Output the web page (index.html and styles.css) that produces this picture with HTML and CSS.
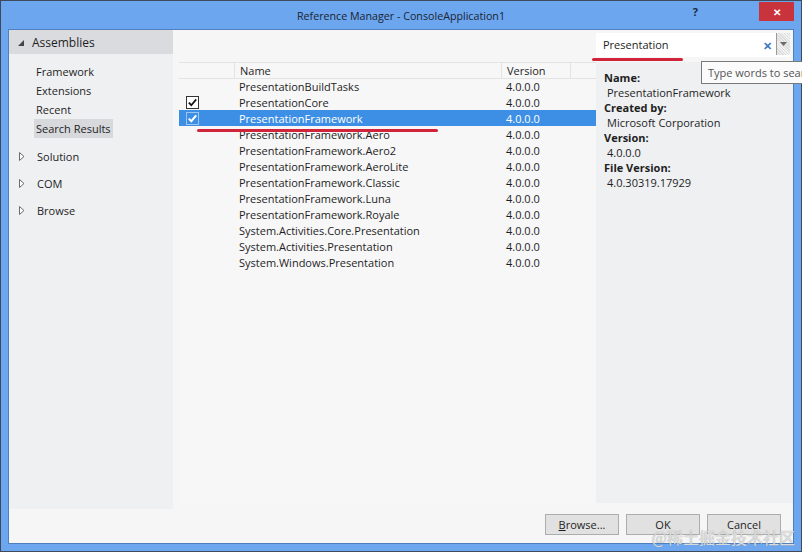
FILE: index.html
```html
<!DOCTYPE html>
<html>
<head>
<meta charset="utf-8">
<link rel="stylesheet" href="styles.css">
</head>
<body>
<div class="window">
  <div class="titlebar">
    <span class="title">Reference Manager - ConsoleApplication1</span>
    <div class="caption">
      <span class="help">?</span>
      <span class="close">✕</span>
    </div>
  </div>
  <div class="client">
    <div class="main">
      <nav class="nav">
        <div class="nav-head"><span class="tri-open"></span>Assemblies</div>
        <ul class="sub">
          <li><span>Framework</span></li>
          <li><span>Extensions</span></li>
          <li><span>Recent</span></li>
          <li><span class="sel">Search Results</span></li>
        </ul>
        <ul class="groups">
          <li><svg class="tri-closed" width="6" height="9" viewBox="0 0 6 9"><path d="M0.5 0.5L5 4.5L0.5 8.5Z" fill="#fff" stroke="#6b6b6b"/></svg>Solution</li>
          <li><svg class="tri-closed" width="6" height="9" viewBox="0 0 6 9"><path d="M0.5 0.5L5 4.5L0.5 8.5Z" fill="#fff" stroke="#6b6b6b"/></svg>COM</li>
          <li><svg class="tri-closed" width="6" height="9" viewBox="0 0 6 9"><path d="M0.5 0.5L5 4.5L0.5 8.5Z" fill="#fff" stroke="#6b6b6b"/></svg>Browse</li>
        </ul>
      </nav>
      <div class="content">
        <div class="toolbar">
          <div class="search">
            <span class="search-text">Presentation</span>
            <span class="search-x">✕</span>
            <span class="search-drop"><svg width="7" height="4" viewBox="0 0 7 4"><path d="M0 0H7L3.5 4Z" fill="#6a6a6a"/></svg></span>
          </div>
        </div>
        <div class="panes">
          <div class="list">
            <div class="row head">
              <span class="c-check"></span>
              <span class="c-name">Name</span>
              <span class="c-ver">Version</span>
              <span class="c-rest"></span>
            </div>
            <div class="row"><span class="c-check"></span><span class="c-name">PresentationBuildTasks</span><span class="c-ver">4.0.0.0</span></div>
            <div class="row"><span class="c-check"><svg class="cb" width="13" height="13" viewBox="0 0 13 13"><rect x="0.5" y="0.5" width="12" height="12" fill="#fff" stroke="#333"/><path d="M2.8 6.6L5.3 9.2L10.2 3.4" fill="none" stroke="#111" stroke-width="1.7"/></svg></span><span class="c-name">PresentationCore</span><span class="c-ver">4.0.0.0</span></div>
            <div class="row selected"><span class="c-check"><svg class="cb" width="13" height="13" viewBox="0 0 13 13"><rect x="0.5" y="0.5" width="12" height="12" fill="none" stroke="#fff" stroke-dasharray="1 1"/><path d="M2.8 6.6L5.3 9.2L10.2 3.4" fill="none" stroke="#fff" stroke-width="2"/></svg></span><span class="c-name">PresentationFramework</span><span class="c-ver">4.0.0.0</span></div>
            <div class="row"><span class="c-check"></span><span class="c-name">PresentationFramework.Aero</span><span class="c-ver">4.0.0.0</span></div>
            <div class="row"><span class="c-check"></span><span class="c-name">PresentationFramework.Aero2</span><span class="c-ver">4.0.0.0</span></div>
            <div class="row"><span class="c-check"></span><span class="c-name">PresentationFramework.AeroLite</span><span class="c-ver">4.0.0.0</span></div>
            <div class="row"><span class="c-check"></span><span class="c-name">PresentationFramework.Classic</span><span class="c-ver">4.0.0.0</span></div>
            <div class="row"><span class="c-check"></span><span class="c-name">PresentationFramework.Luna</span><span class="c-ver">4.0.0.0</span></div>
            <div class="row"><span class="c-check"></span><span class="c-name">PresentationFramework.Royale</span><span class="c-ver">4.0.0.0</span></div>
            <div class="row"><span class="c-check"></span><span class="c-name">System.Activities.Core.Presentation</span><span class="c-ver">4.0.0.0</span></div>
            <div class="row"><span class="c-check"></span><span class="c-name">System.Activities.Presentation</span><span class="c-ver">4.0.0.0</span></div>
            <div class="row"><span class="c-check"></span><span class="c-name">System.Windows.Presentation</span><span class="c-ver">4.0.0.0</span></div>
          </div>
          <div class="details">
            <div class="lbl">Name:</div>
            <div class="val">PresentationFramework</div>
            <div class="lbl">Created by:</div>
            <div class="val">Microsoft Corporation</div>
            <div class="lbl">Version:</div>
            <div class="val">4.0.0.0</div>
            <div class="lbl">File Version:</div>
            <div class="val">4.0.30319.17929</div>
          </div>
        </div>
      </div>
    </div>
    <div class="footer">
      <button class="btn"><u>B</u>rowse...</button>
      <button class="btn">OK</button>
      <button class="btn">Cancel</button>
    </div>
  </div>
  <div class="mark mark-row"></div>
  <div class="mark mark-search"></div>
  <div class="tooltip">Type words to search</div>
  <div class="watermark">@稀土掘金技术社区</div>
</div>
</body>
</html>
```
FILE: styles.css
```css
html, body {
  margin: 0;
  padding: 0;
  width: 802px;
  height: 552px;
  overflow: hidden;
  background: #6ba6ef;
}
* { box-sizing: border-box; }
ul { list-style: none; margin: 0; padding: 0; }

.window {
  position: relative;
  width: 802px;
  height: 552px;
  border: 1px solid #3e4a5a;
  background: #6ba6ef;
  padding: 0 7px 7px 7px;
  display: flex;
  flex-direction: column;
  font-family: "Open Sans", "Noto Sans", sans-serif;
  font-size: 11px;
  color: #1e1e1e;
}

.titlebar {
  height: 28px;
  position: relative;
  display: flex;
  align-items: center;
  justify-content: center;
}
.title {
  font-size: 10.7px;
  color: #1b2430;
  padding-top: 1px;
}
.caption {
  position: absolute;
  right: 0;
  top: 0;
  display: flex;
  align-items: flex-start;
}
.help {
  font-weight: bold;
  font-size: 11px;
  color: #1d2b3c;
  margin-top: 3px;
  margin-right: 61px;
}
.close {
  width: 35px;
  height: 19px;
  margin-top: 1px;
  background: #c9343c;
  color: #fff;
  font-size: 10px;
  font-weight: bold;
  display: flex;
  align-items: center;
  justify-content: center;
}

.client {
  flex: 1;
  border: 1px solid #4f7fbf;
  background: #f6f6f7;
  display: flex;
  flex-direction: column;
}
.main {
  height: 479px;
  display: flex;
  gap: 6px;
}
.nav {
  width: 164px;
  background: #eef0f2;
}
.nav-head {
  height: 24px;
  background: #dadbde;
  display: flex;
  align-items: center;
  font-size: 12px;
  padding-left: 9px;
}
.tri-open {
  width: 0;
  height: 0;
  border-left: 6px solid transparent;
  border-bottom: 6px solid #444;
  margin-right: 8px;
  margin-top: 1px;
}
.sub { margin-top: 8px; }
.sub li {
  height: 19px;
  display: flex;
  align-items: center;
  padding-left: 25px;
}
.sub li span {
  padding: 0 2px;
  height: 19px;
  line-height: 19px;
}
.sub li .sel { background: #d8d9dc; }
.groups { margin-top: 5px; }
.groups li {
  height: 27px;
  display: flex;
  align-items: center;
  padding-left: 10px;
}
.tri-closed {
  display: block;
  margin-right: 12px;
}

.content {
  flex: 1;
  display: flex;
  flex-direction: column;
  padding-bottom: 6px;
}
.toolbar {
  height: 32px;
  display: flex;
  justify-content: flex-end;
  padding-top: 3px;
  padding-right: 3px;
}
.search {
  width: 194px;
  height: 24px;
  background: #fff;
  display: flex;
  align-items: center;
  padding-left: 7px;
}
.search-text { flex: 1; font-size: 11px; padding-bottom: 1px; }
.search-x {
  color: #3b79c2;
  font-weight: bold;
  font-size: 11px;
  margin-right: 4px;
}
.search-drop {
  width: 14px;
  height: 22px;
  align-self: flex-start;
  border-left: 1px solid #9a9a9a;
  background: repeating-linear-gradient(45deg, #dcdcdc 0 1px, #f2f2f2 1px 2px);
  display: flex;
  align-items: center;
  justify-content: center;
}

.panes {
  flex: 1;
  display: flex;
}
.list {
  width: 417px;
  background: #f7f7f8;
}
.row {
  height: 16px;
  display: flex;
  align-items: center;
  white-space: nowrap;
  line-height: 15px;
}
.row.head {
  border-top: 1px solid #e2e3e5;
  border-bottom: 1px solid #e2e3e5;
  box-sizing: content-box;
  height: 15px;
  margin-bottom: -1px;
}
.row.head span { height: 15px; line-height: 15px; }
.row.head .c-name, .row.head .c-ver, .row.head .c-rest { border-left: 1px solid #e2e3e5; }
.c-check {
  width: 55px;
  padding-left: 7px;
  display: flex;
  align-items: center;
}
.c-name { width: 267px; padding-left: 5px; }
.c-ver { width: 69px; padding-left: 5px; }
.c-rest { flex: 1; }
.row.selected {
  background: #3d8fe5;
  color: #fff;
}
.cb { display: block; }

.details {
  flex: 1;
  background: #eef0f2;
  padding: 8px 0 0 8px;
  line-height: 15px;
}
.lbl { font-weight: bold; }
.val { padding-left: 3px; }

.footer {
  flex: 1;
  display: flex;
  justify-content: flex-end;
  align-items: flex-start;
  gap: 7px;
  padding-top: 5px;
  padding-right: 12px;
}
.btn {
  width: 74px;
  height: 21px;
  background: #e1e1e1;
  border: 1px solid #adadad;
  font-family: "Open Sans", "Noto Sans", sans-serif;
  font-size: 11px;
  color: #1e1e1e;
  padding: 0;
}

.mark {
  position: absolute;
  height: 3px;
  background: #d1233a;
  border-radius: 2px;
}
.mark-row { left: 196px; top: 128px; width: 241px; }
.mark-search { left: 591px; top: 57px; width: 91px; }

.tooltip {
  position: absolute;
  left: 700px;
  top: 60px;
  height: 23px;
  width: 140px;
  border: 1px solid #7a7a7a;
  background: #fbfbfb;
  color: #555;
  font-size: 11px;
  padding-left: 6px;
  line-height: 21px;
  white-space: nowrap;
}

.watermark {
  position: absolute;
  right: 6px;
  bottom: 2px;
  font-family: "Noto Sans CJK SC", sans-serif;
  font-size: 16px;
  color: rgba(245, 245, 245, 0.75);
  text-shadow: 0 0 1px #8a8a8a;
  white-space: nowrap;
}
```
